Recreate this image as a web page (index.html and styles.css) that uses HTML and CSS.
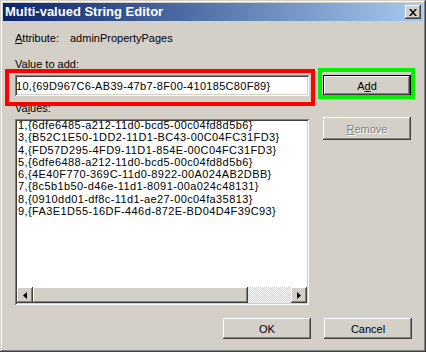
FILE: index.html
```html
<!DOCTYPE html>
<html lang="en">
<head>
    <meta charset="UTF-8">
    <meta name="viewport" content="width=device-width, initial-scale=1.0">
    <title>Multi-valued String Editor</title>
    <link rel="stylesheet" href="styles.css">
</head>
<body>
    <div class="window">
        <div class="titlebar">
            <span class="title">Multi-valued String Editor</span>
            <button class="close raised" aria-label="Close">
                <svg width="8" height="7" viewBox="0 0 8 7"><path d="M0 0h2l2 2.4 2-2.4h2l-3 3.5 3 3.5h-2l-2-2.4-2 2.4h-2l3-3.5z" fill="#000"/></svg>
            </button>
        </div>
        <div class="dialog">
            <div class="attr">
                <span class="attr-label"><u>A</u>ttribute:</span>
                <span>adminPropertyPages</span>
            </div>
            <label class="label" for="value">Value to add:</label>
            <div class="row">
                <input type="text" id="value" class="field" value="10,{69D967C6-AB39-47b7-8F00-410185C80F89}">
                <button class="btn raised default">A<u>d</u>d</button>
            </div>
            <div class="row values-row">
                <div class="col">
                    <div class="label">Va<u>l</u>ues:</div>
                    <div class="listbox">
                        <div class="items">
                            <div>1,{6dfe6485-a212-11d0-bcd5-00c04fd8d5b6}</div>
                            <div>3,{B52C1E50-1DD2-11D1-BC43-00C04FC31FD3}</div>
                            <div>4,{FD57D295-4FD9-11D1-854E-00C04FC31FD3}</div>
                            <div>5,{6dfe6488-a212-11d0-bcd5-00c04fd8d5b6}</div>
                            <div>6,{4E40F770-369C-11d0-8922-00A024AB2DBB}</div>
                            <div>7,{8c5b1b50-d46e-11d1-8091-00a024c48131}</div>
                            <div>8,{0910dd01-df8c-11d1-ae27-00c04fa35813}</div>
                            <div>9,{FA3E1D55-16DF-446d-872E-BD04D4F39C93}</div>
                        </div>
                        <div class="hscroll">
                            <div class="arrow raised">
                                <svg width="4" height="7" viewBox="0 0 4 7"><path d="M4 0v7L0 3.5z" fill="#000"/></svg>
                            </div>
                            <div class="thumb raised"></div>
                            <div class="track"></div>
                            <div class="arrow raised">
                                <svg width="4" height="7" viewBox="0 0 4 7"><path d="M0 0v7l4-3.5z" fill="#000"/></svg>
                            </div>
                        </div>
                    </div>
                </div>
                <button class="btn raised remove" disabled><u>R</u>emove</button>
            </div>
            <div class="actions">
                <button class="btn raised">OK</button>
                <button class="btn raised">Cancel</button>
            </div>
        </div>
        <!-- highlight boxes drawn over the dialog -->
        <div class="mark mark-red"></div>
        <div class="mark mark-green"></div>
    </div>
</body>
</html>
```

FILE: styles.css
```css
body {
    margin: 0;
    font-family: "Liberation Sans", Arial, sans-serif;
    font-size: 11px;
    color: #000;
}
.window {
    position: relative;
    width: 426px;
    height: 352px;
    box-sizing: border-box;
    padding: 3px;
    background-color: #d4d0c8;
    box-shadow: inset -1px -1px #404040, inset 1px 1px #d4d0c8, inset -2px -2px #808080, inset 2px 2px #fff;
}
.raised {
    background-color: #d4d0c8;
    box-shadow: inset -1px -1px #404040, inset 1px 1px #fff, inset -2px -2px #808080, inset 2px 2px #d4d0c8;
}
.titlebar {
    display: flex;
    align-items: center;
    justify-content: space-between;
    height: 18px;
    padding: 0 2px;
    background: linear-gradient(to right, #0a246a, #a6caf0);
}
.title {
    color: #fff;
    font-weight: bold;
    font-size: 13px;
    line-height: 18px;
}
.close {
    display: flex;
    align-items: center;
    justify-content: center;
    width: 16px;
    height: 14px;
    padding: 0;
    border: none;
}
.dialog {
    padding: 10px 11px 0 12px;
}
.attr {
    display: flex;
    line-height: 14px;
}
.attr-label {
    width: 55px;
}
.label {
    display: block;
    margin-top: 12px;
    line-height: 14px;
}
.row {
    display: flex;
    align-items: flex-start;
    gap: 14px;
    margin-top: 4px;
}
.field {
    width: 294px;
    height: 21px;
    box-sizing: border-box;
    margin: 0;
    padding: 0 1px;
    border: none;
    outline: none;
    background-color: #fff;
    font-family: inherit;
    font-size: 11px;
    letter-spacing: 0.3px;
    color: #000;
    box-shadow: inset 1px 1px #808080, inset -1px -1px #fff, inset 2px 2px #404040, inset -2px -2px #d4d0c8;
}
.btn {
    width: 88px;
    height: 21px;
    box-sizing: border-box;
    padding: 0;
    border: none;
    font-family: inherit;
    font-size: 11px;
    color: #000;
}
.btn.default {
    border: 1px solid #000;
}
.btn:disabled {
    color: #808080;
    text-shadow: 1px 1px 0 #fff;
}
.values-row {
    margin-top: 5px;
}
.values-row .label {
    margin-top: 0;
}
.remove {
    height: 23px;
    margin-top: 16px;
}
.listbox {
    display: flex;
    flex-direction: column;
    width: 294px;
    height: 186px;
    box-sizing: border-box;
    margin-top: 4px;
    padding: 0 2px 2px;
    background-color: #fff;
    box-shadow: inset 1px 1px #808080, inset -1px -1px #fff, inset 2px 2px #404040, inset -2px -2px #d4d0c8;
}
.items {
    flex: 1;
    overflow: hidden;
    padding: 0 1px;
    line-height: 12.3px;
    letter-spacing: 0.4px;
    white-space: nowrap;
}
.hscroll {
    display: flex;
    height: 16px;
}
.arrow {
    display: flex;
    align-items: center;
    justify-content: center;
    width: 16px;
}
.thumb {
    width: 215px;
}
.track {
    flex: 1;
    background: repeating-conic-gradient(#fff 0 25%, #d4d0c8 0 50%) 0 0 / 2px 2px;
}
.actions {
    display: flex;
    justify-content: flex-end;
    gap: 13px;
    margin-top: 13px;
}
.mark {
    position: absolute;
    box-sizing: border-box;
    border: 4px solid;
}
.mark-red {
    left: 5px;
    top: 69px;
    width: 310px;
    height: 37px;
    border-color: #ff0000;
}
.mark-green {
    left: 318px;
    top: 68px;
    width: 97px;
    height: 31px;
    border-color: #00f000;
}
```
